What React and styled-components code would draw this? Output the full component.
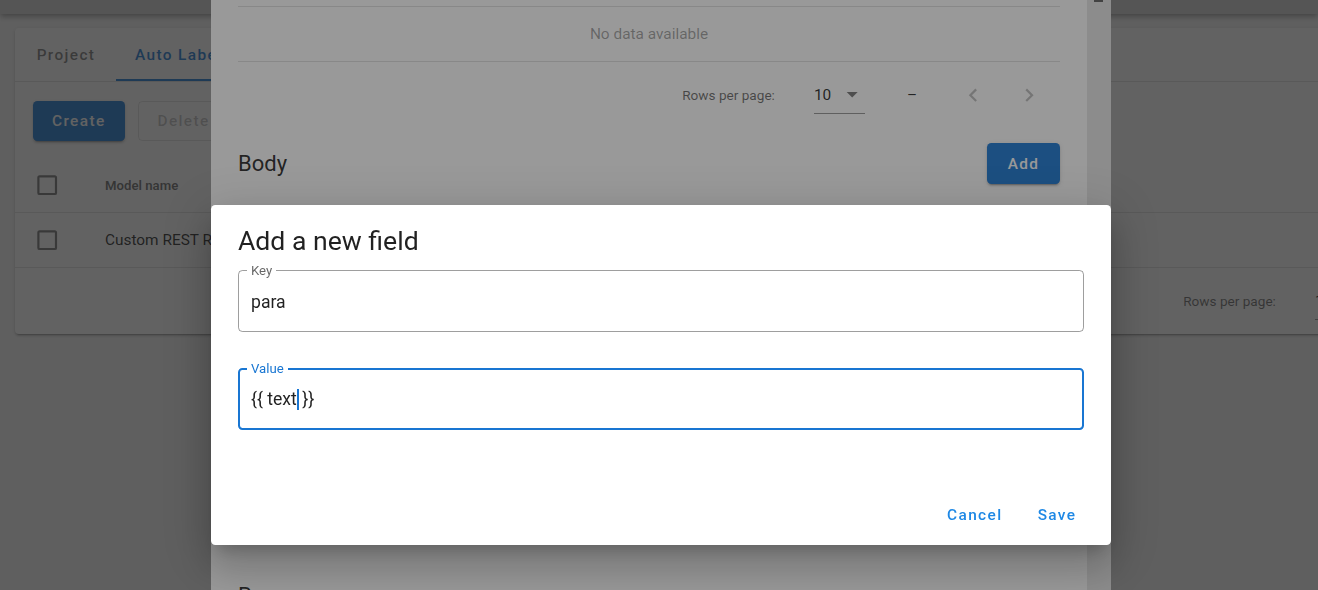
import React from 'react';
import styled, { createGlobalStyle } from 'styled-components';

const Global = createGlobalStyle`
  html, body { margin: 0; padding: 0; height: 100%; overflow: hidden; background: #f5f5f5; }
  body { font-family: Roboto, "Noto Sans", "Liberation Sans", sans-serif; color: rgba(0,0,0,.87); }
  * { box-sizing: border-box; }
`;

const PRIMARY = '#1976d2';

/* ---------- background page ---------- */
const Page = styled.div`
  width: 1318px;
  height: 590px;
  overflow: hidden;
  background: #f5f5f5;
`;
const AppBar = styled.div`
  height: 14px;
  background: #d4d4d4;
  box-shadow: 0 2px 4px -1px rgba(0,0,0,.2), 0 4px 5px 0 rgba(0,0,0,.14), 0 1px 10px 0 rgba(0,0,0,.12);
`;
const Main = styled.main`
  padding: 14px 0 0 15px;
`;
const Card = styled.section`
  width: 1546px;
  background: #fff;
  border-radius: 4px;
  box-shadow: 0 3px 1px -2px rgba(0,0,0,.2), 0 2px 2px 0 rgba(0,0,0,.14), 0 1px 5px 0 rgba(0,0,0,.12);
`;
const TabBar = styled.nav`
  display: flex;
  height: 54px;
  padding-left: 1px;
  border-bottom: 1px solid rgba(0,0,0,.12);
`;
const Tab = styled.div`
  min-width: 100px;
  padding: 0 19px;
  display: flex;
  align-items: center;
  justify-content: center;
  font-size: 15.4px;
  font-weight: 500;
  letter-spacing: .0892em;
  color: ${p => (p.$active ? PRIMARY : 'rgba(0,0,0,.54)')};
  border-bottom: 2px solid ${p => (p.$active ? PRIMARY : 'transparent')};
  border-top: 2px solid transparent;
`;
const Toolbar = styled.div`
  display: flex;
  gap: 13px;
  padding: 19px 18px 18px;
`;
const Button = styled.button`
  height: ${p => (p.$h ? p.$h : 40)}px;
  min-width: ${p => (p.$minW ? p.$minW : 70)}px;
  padding: 0 ${p => (p.$pad ? p.$pad : 17.6)}px;
  border-radius: 4.4px;
  font-family: inherit;
  font-size: 15.4px;
  font-weight: 500;
  letter-spacing: .0892em;
  cursor: pointer;
  ${p => p.$variant === 'filled' && `
    background: ${PRIMARY};
    color: #fff;
    border: none;
    box-shadow: 0 3px 1px -2px rgba(0,0,0,.2), 0 2px 2px 0 rgba(0,0,0,.14), 0 1px 5px 0 rgba(0,0,0,.12);
  `}
  ${p => p.$variant === 'outlined' && `
    background: transparent;
    color: rgba(0,0,0,.26);
    border: 1px solid rgba(0,0,0,.12);
  `}
  ${p => p.$variant === 'text' && `
    background: transparent;
    color: ${PRIMARY};
    border: none;
  `}
`;
const GridRow = styled.div`
  display: grid;
  grid-template-columns: 71px 1fr;
  align-items: center;
  height: ${p => p.$h}px;
  padding-left: 19px;
  border-bottom: 1px solid rgba(0,0,0,.12);
  font-size: ${p => (p.$head ? '13.2px' : '15.4px')};
  font-weight: ${p => (p.$head ? 600 : 400)};
  color: ${p => (p.$head ? 'rgba(0,0,0,.6)' : 'rgba(0,0,0,.87)')};
`;
const Icon = styled.svg`
  display: block;
  width: 26.4px;
  height: 26.4px;
  fill: ${p => p.$color || 'rgba(0,0,0,.54)'};
`;

const CheckBox = () => (
  <Icon viewBox="0 0 24 24">
    <path d="M19,3H5C3.89,3 3,3.89 3,5V19A2,2 0 0,0 5,21H19A2,2 0 0,0 21,19V5C21,3.89 20.1,3 19,3M19,5V19H5V5H19Z" />
  </Icon>
);

/* ---------- table footer (shared) ---------- */
const Footer = styled.div`
  display: flex;
  align-items: center;
  justify-content: flex-end;
  height: 66px;
  padding-right: 11px;
  font-size: 13.6px;
  color: rgba(0,0,0,.6);
`;
const Select = styled.div`
  display: flex;
  align-items: center;
  justify-content: space-between;
  width: 51px;
  height: 37px;
  margin-left: 39px;
  border-bottom: 1px solid rgba(0,0,0,.42);
  font-size: 15.4px;
  color: rgba(0,0,0,.87);
`;
const Dash = styled.span`
  margin: 0 36px 0 42px;
  color: rgba(0,0,0,.87);
  font-size: 15.4px;
`;
const PagerButton = styled.div`
  width: 40px;
  height: 40px;
  display: flex;
  align-items: center;
  justify-content: center;
  & + & { margin-left: 16px; }
`;

const TableFooter = () => (
  <Footer>
    <span>Rows per page:</span>
    <Select>
      <span>10</span>
      <Icon viewBox="0 0 24 24" $color="rgba(0,0,0,.54)">
        <path d="M7,10L12,15L17,10H7Z" />
      </Icon>
    </Select>
    <Dash>–</Dash>
    <PagerButton>
      <Icon viewBox="0 0 24 24" $color="rgba(0,0,0,.26)">
        <path d="M15.41,16.58L10.83,12L15.41,7.41L14,6L8,12L14,18L15.41,16.58Z" />
      </Icon>
    </PagerButton>
    <PagerButton>
      <Icon viewBox="0 0 24 24" $color="rgba(0,0,0,.26)">
        <path d="M8.59,16.58L13.17,12L8.59,7.41L10,6L16,12L10,18L8.59,16.58Z" />
      </Icon>
    </PagerButton>
  </Footer>
);

/* ---------- overlays ---------- */
const Scrim = styled.div`
  position: fixed;
  inset: 0;
  z-index: ${p => p.$z};
  background: rgba(33,33,33,.46);
`;
const DialogLayer = styled.div`
  position: fixed;
  inset: 0;
  z-index: ${p => p.$z};
  display: flex;
  justify-content: center;
  align-items: flex-start;
  padding-left: 4px;
  padding-top: ${p => p.$top || 0}px;
`;

/* ---------- config dialog (scrolled) ---------- */
const ScrollDialog = styled.div`
  width: 900px;
  height: 100%;
  display: flex;
  background: #fff;
  overflow: hidden;
`;
const ScrollContent = styled.div`
  flex: 1;
  padding: 6px 27px 0;
`;
const ScrollTrack = styled.div`
  width: 24px;
  background: #e8e8e8;
  padding-left: 7px;
`;
const ScrollThumb = styled.div`
  width: 9px;
  height: 2px;
  background: #5e5e5e;
`;
const NoDataRow = styled.div`
  height: 56px;
  display: flex;
  align-items: center;
  justify-content: center;
  border-top: 1px solid rgba(0,0,0,.12);
  border-bottom: 1px solid rgba(0,0,0,.12);
  font-size: 15.4px;
  color: rgba(0,0,0,.38);
`;
const SectionHeader = styled.div`
  display: flex;
  align-items: center;
  justify-content: space-between;
  height: 41px;
  margin-top: ${p => p.$mt}px;
`;
const SectionTitle = styled.h2`
  margin: 0;
  font-size: 22px;
  font-weight: 400;
  color: rgba(0,0,0,.87);
`;
const HeadRow = styled.div`
  display: grid;
  grid-template-columns: 1fr 1fr 90px;
  align-items: center;
  height: 53px;
  margin-top: 16px;
  padding: 0 17.6px;
  font-size: 13.2px;
  font-weight: 600;
  color: rgba(0,0,0,.6);
`;

/* ---------- field dialog ---------- */
const FieldDialog = styled.div`
  width: 900px;
  background: #fff;
  border-radius: 4.4px;
  box-shadow: 0 11px 15px -7px rgba(0,0,0,.2), 0 24px 38px 3px rgba(0,0,0,.14), 0 9px 46px 8px rgba(0,0,0,.12);
`;
const DialogTitle = styled.h1`
  margin: 0;
  padding: 18px 27px 0;
  font-size: 26.6px;
  line-height: 35.2px;
  font-weight: 400;
  color: rgba(0,0,0,.87);
`;
const Form = styled.div`
  display: flex;
  flex-direction: column;
  gap: 36px;
  padding: 12px 27px 0;
`;
const Outline = styled.div`
  position: relative;
  height: 62px;
  display: flex;
  align-items: center;
  border: ${p => (p.$focused ? `2px solid ${PRIMARY}` : '1px solid rgba(0,0,0,.38)')};
  border-radius: 4.4px;
  padding-left: ${p => (p.$focused ? 11 : 12)}px;
  padding-top: 1px;
`;
const FloatLabel = styled.span`
  position: absolute;
  top: ${p => (p.$focused ? -9 : -8)}px;
  left: ${p => (p.$focused ? 7 : 8)}px;
  padding: 0 4px;
  background: #fff;
  font-size: 13.2px;
  line-height: 16px;
  color: ${p => (p.$focused ? PRIMARY : 'rgba(0,0,0,.6)')};
`;
const InputText = styled.span`
  font-size: 17.6px;
  white-space: pre;
  color: rgba(0,0,0,.87);
`;
const Caret = styled.span`
  display: inline-block;
  width: 2px;
  height: 21px;
  margin: 0 -1px 0 0;
  vertical-align: -5px;
  background: ${PRIMARY};
`;
const Actions = styled.div`
  display: flex;
  justify-content: flex-end;
  padding: 65px 17px 10px 0;
`;
const ActionButton = styled(Button)`
  color: #1e88e5;
`;

const TextField = ({ label, focused, children }) => (
  <Outline $focused={focused}>
    <FloatLabel $focused={focused}>{label}</FloatLabel>
    <InputText>{children}</InputText>
  </Outline>
);

export default function App() {
  return (
    <>
      <Global />
      <Page>
        <AppBar />
        <Main>
          <Card>
            <TabBar>
              <Tab>Project</Tab>
              <Tab $active>Auto Labeling</Tab>
              <Tab>Members</Tab>
            </TabBar>
            <Toolbar>
              <Button $variant="filled" $pad={19}>Create</Button>
              <Button $variant="outlined" $pad={19}>Delete</Button>
            </Toolbar>
            <GridRow $h={54} $head>
              <CheckBox />
              <span>Model name</span>
            </GridRow>
            <GridRow $h={55}>
              <CheckBox />
              <span>Custom REST Request</span>
            </GridRow>
            <TableFooter />
          </Card>
        </Main>
      </Page>

      <Scrim $z={10} />
      <DialogLayer $z={11}>
        <ScrollDialog>
          <ScrollContent>
            <NoDataRow>No data available</NoDataRow>
            <TableFooter />
            <SectionHeader $mt={15}>
              <SectionTitle>Body</SectionTitle>
              <Button $variant="filled" $h={41} $minW={73}>Add</Button>
            </SectionHeader>
            <HeadRow>
              <span>Key</span>
              <span>Value</span>
              <span>Actions</span>
            </HeadRow>
            <NoDataRow>No data available</NoDataRow>
            <TableFooter />
            <SectionHeader $mt={200}>
              <SectionTitle>Response</SectionTitle>
            </SectionHeader>
          </ScrollContent>
          <ScrollTrack>
            <ScrollThumb />
          </ScrollTrack>
        </ScrollDialog>
      </DialogLayer>

      <Scrim $z={12} />
      <DialogLayer $z={13} $top={205}>
        <FieldDialog>
          <DialogTitle>Add a new field</DialogTitle>
          <Form>
            <TextField label="Key">para</TextField>
            <TextField label="Value" focused>
              {'{{ text'}<Caret />{' }}'}
            </TextField>
          </Form>
          <Actions>
            <ActionButton $variant="text">Cancel</ActionButton>
            <ActionButton $variant="text">Save</ActionButton>
          </Actions>
        </FieldDialog>
      </DialogLayer>
    </>
  );
}
